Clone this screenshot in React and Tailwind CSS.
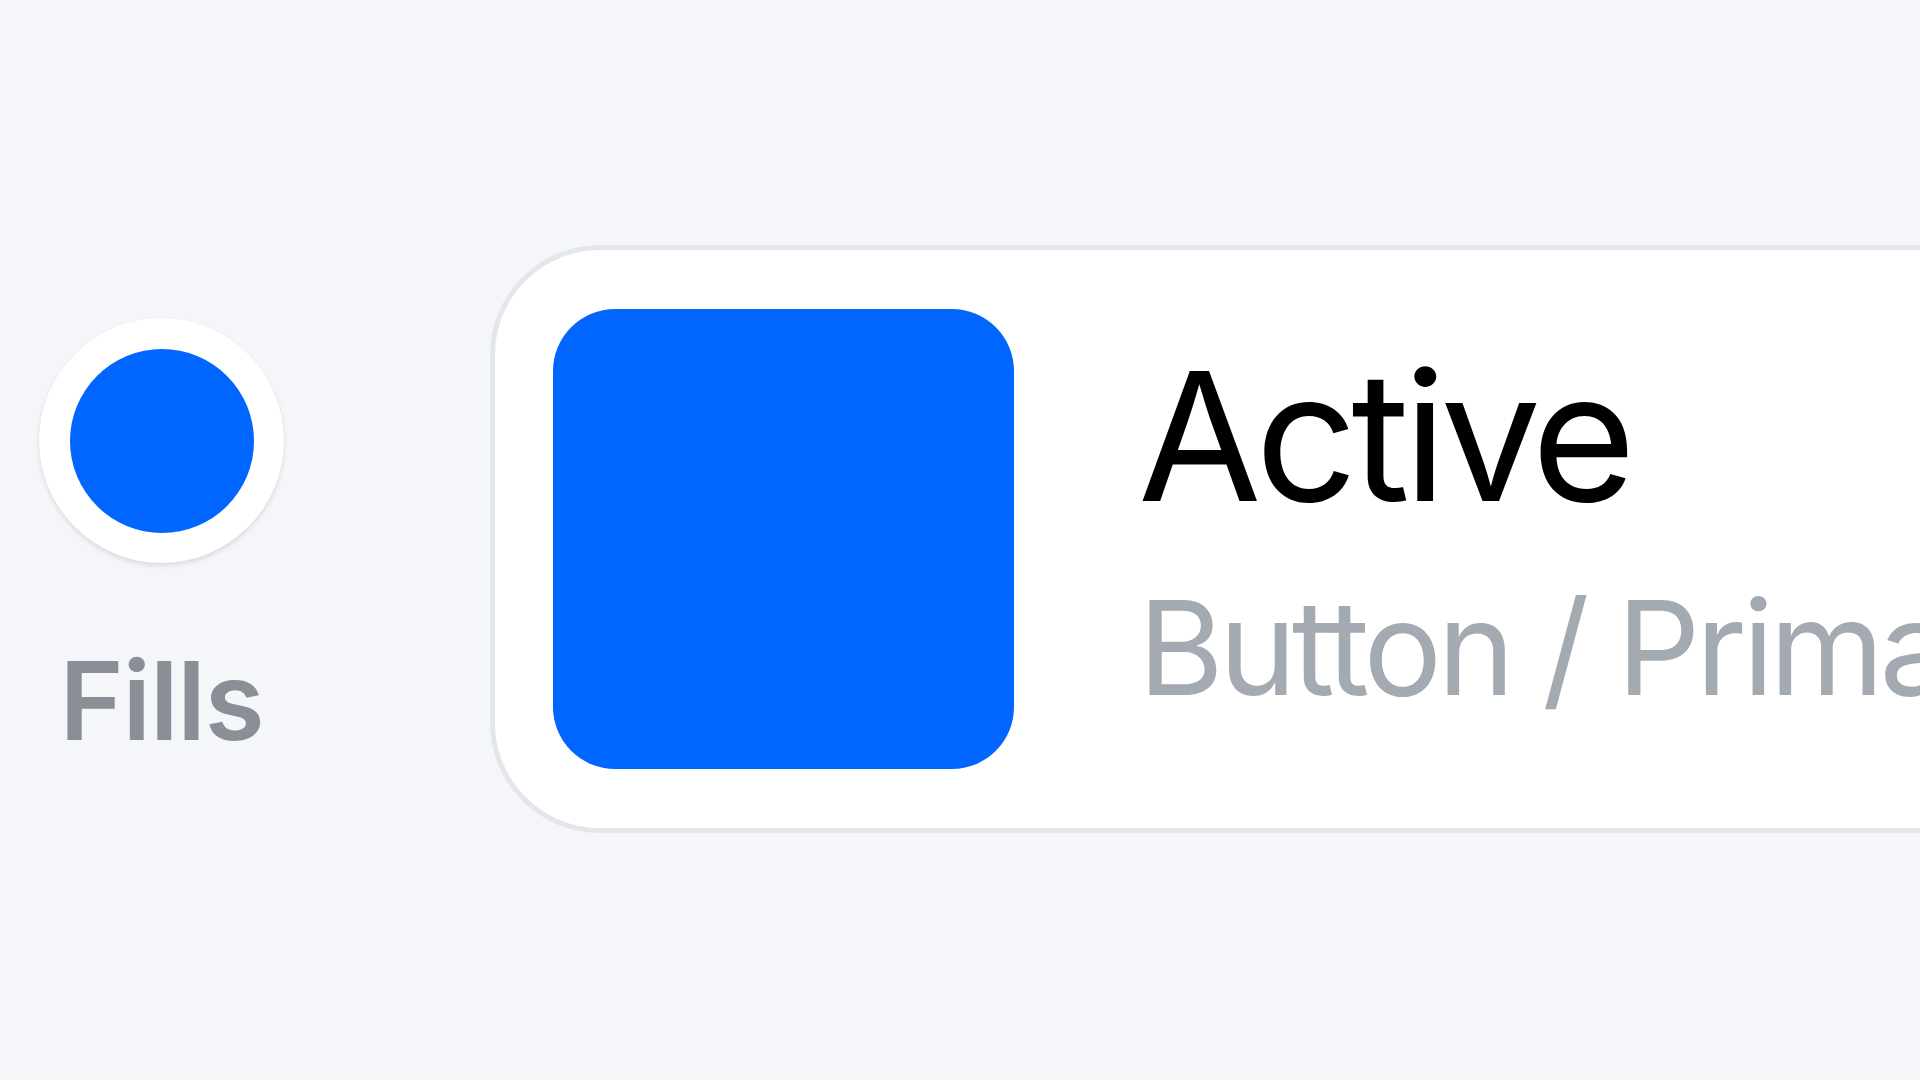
export default function App() {
  return (
    <div
      className="w-[1920px] h-[1080px] overflow-hidden bg-[#f5f6f9] flex items-start"
      style={{ fontFamily: "Inter, 'Noto Sans', sans-serif" }}
    >
      <div className="flex flex-col items-center ml-[39px] mt-[318px] w-[245px] shrink-0">
        <div className="w-[245px] h-[245px] rounded-full bg-white flex items-center justify-center shadow-[0_3px_5px_rgba(0,0,0,0.1),0_0_1px_rgba(0,0,0,0.06)]">
          <div className="w-[184px] h-[184px] rounded-full bg-[#0066ff]" />
        </div>
        <div className="mt-[83px] text-[109px] leading-none font-semibold tracking-[-0.01em] text-[#8a8f97]">Fills</div>
      </div>
      <div className="ml-[206px] mt-[245px] shrink-0 w-[1600px] rounded-[110px] border-[5px] border-[#e3e6ea] bg-white p-[59px] pl-[58px] flex items-start">
        <div className="w-[461px] h-[460px] rounded-[62px] bg-[#0066ff] shrink-0" />
        <div className="ml-[124px] pt-[38px] flex flex-col whitespace-nowrap">
          <div className="text-[179px] leading-none font-normal tracking-[-0.035em] text-black">Active</div>
          <div className="mt-[56px] text-[131px] leading-none font-normal tracking-[-0.036em] text-[#a4aab2]">Button / Primary</div>
        </div>
      </div>
    </div>
  );
}
